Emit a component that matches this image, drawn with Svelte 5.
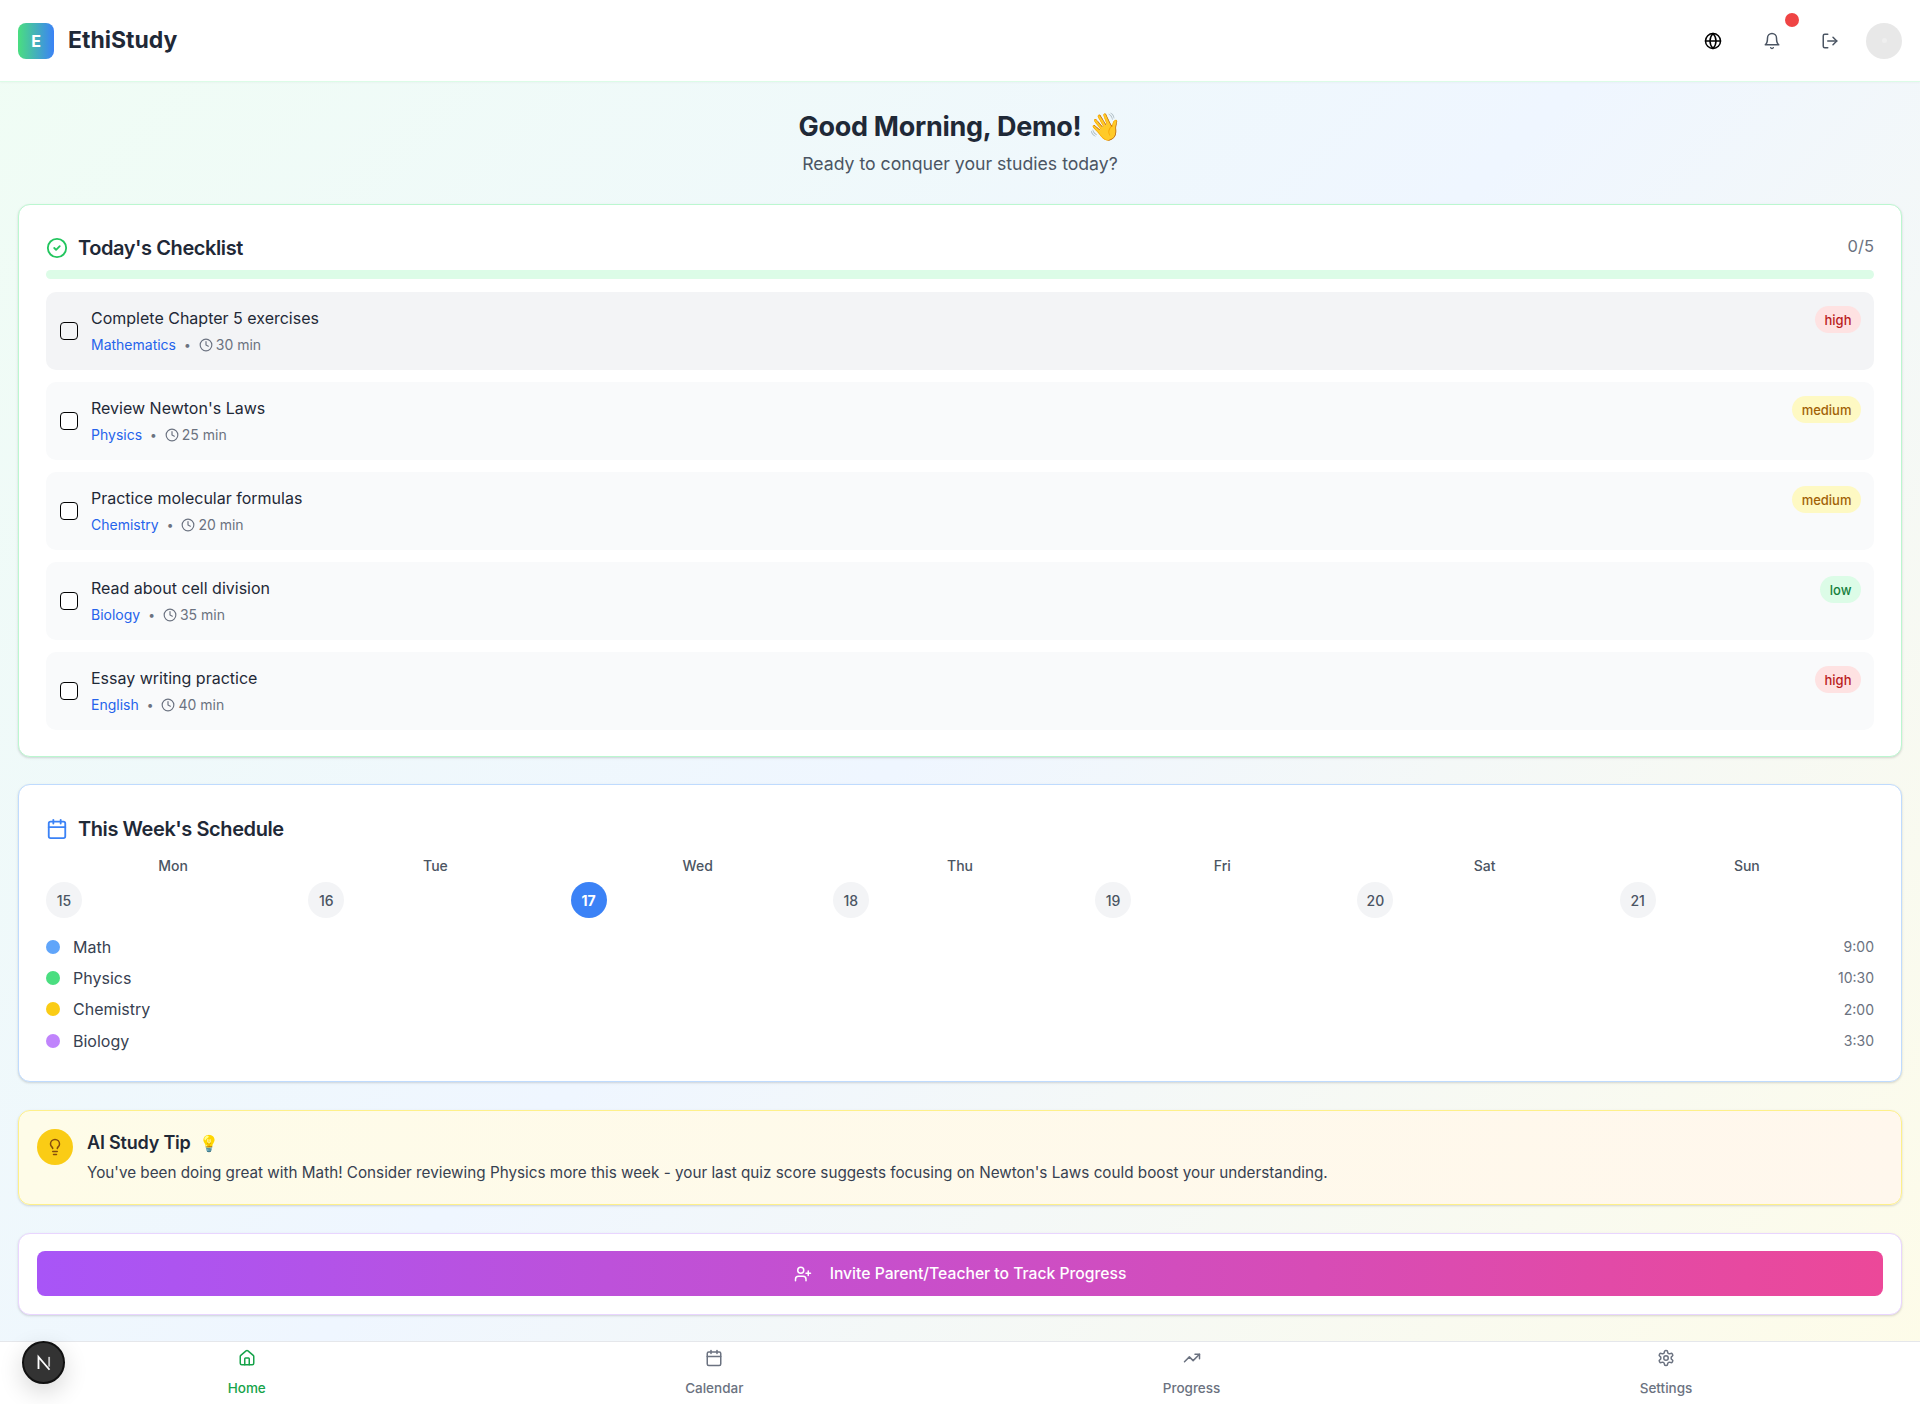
<script>
  const tasks = [
    { t: 'Complete Chapter 5 exercises', s: 'Mathematics', m: '30 min', p: 'high', hover: true },
    { t: "Review Newton's Laws", s: 'Physics', m: '25 min', p: 'medium' },
    { t: 'Practice molecular formulas', s: 'Chemistry', m: '20 min', p: 'medium' },
    { t: 'Read about cell division', s: 'Biology', m: '35 min', p: 'low' },
    { t: 'Essay writing practice', s: 'English', m: '40 min', p: 'high' }
  ];
  const days = [['Mon', 15], ['Tue', 16], ['Wed', 17], ['Thu', 18], ['Fri', 19], ['Sat', 20], ['Sun', 21]];
  const sched = [
    ['Math', '9:00', 'blue'], ['Physics', '10:30', 'green'], ['Chemistry', '2:00', 'yellow'], ['Biology', '3:30', 'purple']
  ];
</script>

<div class="page">
  <header class="top">
    <div class="brand">
      <div class="logo">E</div>
      <span class="name">EthiStudy</span>
    </div>
    <div class="actions">
      <button class="ib black" aria-label="Language">
        <svg viewBox="0 0 24 24"><circle cx="12" cy="12" r="10"/><path d="M12 2a14.5 14.5 0 0 0 0 20 14.5 14.5 0 0 0 0-20"/><path d="M2 12h20"/></svg>
      </button>
      <button class="ib bell" aria-label="Notifications">
        <svg viewBox="0 0 24 24"><path d="M6 8a6 6 0 0 1 12 0c0 7 3 9 3 9H3s3-2 3-9"/><path d="M10.3 21a1.94 1.94 0 0 0 3.4 0"/></svg>
        <span class="dot"></span>
      </button>
      <button class="ib" aria-label="Log out">
        <svg viewBox="0 0 24 24"><path d="M9 21H5a2 2 0 0 1-2-2V5a2 2 0 0 1 2-2h4"/><polyline points="16 17 21 12 16 7"/><line x1="21" y1="12" x2="9" y2="12"/></svg>
      </button>
      <div class="avatar"><i></i></div>
    </div>
  </header>

  <main>
    <section class="hello">
      <h1>Good Morning, Demo! <span class="emoji">👋</span></h1>
      <p>Ready to conquer your studies today?</p>
    </section>

    <section class="card check">
      <div class="head between">
        <div class="head">
          <svg class="hi green" viewBox="0 0 24 24"><circle cx="12" cy="12" r="10"/><path d="m9 12 2 2 4-4"/></svg>
          <h2>Today's Checklist</h2>
        </div>
        <span class="count">0/5</span>
      </div>
      <div class="bar"></div>
      <div class="list">
        {#each tasks as x}
          <div class="item" class:hover={x.hover}>
            <span class="box"></span>
            <div class="body">
              <div class="tt">{x.t}</div>
              <div class="meta">
                <span class="subj">{x.s}</span>
                <span class="sep">•</span>
                <svg viewBox="0 0 24 24"><circle cx="12" cy="12" r="10"/><polyline points="12 6 12 12 16 14"/></svg>
                <span>{x.m}</span>
              </div>
            </div>
            <span class="pill {x.p}">{x.p}</span>
          </div>
        {/each}
      </div>
    </section>

    <section class="card sched">
      <div class="head">
        <svg class="hi blue" viewBox="0 0 24 24"><path d="M8 2v4"/><path d="M16 2v4"/><rect x="3" y="4" width="18" height="18" rx="2"/><path d="M3 10h18"/></svg>
        <h2>This Week's Schedule</h2>
      </div>
      <div class="week">
        {#each days as d}
          <div class="day">
            <div class="dn">{d[0]}</div>
            <div class="num" class:today={d[1] === 17}>{d[1]}</div>
          </div>
        {/each}
      </div>
      <div class="rows">
        {#each sched as r}
          <div class="row">
            <span class="sd {r[2]}"></span>
            <span class="rn">{r[0]}</span>
            <span class="rt">{r[1]}</span>
          </div>
        {/each}
      </div>
    </section>

    <section class="card tip">
      <div class="bulb">
        <svg viewBox="0 0 24 24"><path d="M15 14c.2-1 .7-1.7 1.5-2.5 1-.9 1.5-2.2 1.5-3.5A6 6 0 0 0 6 8c0 1 .2 2.2 1.5 3.5.7.7 1.3 1.5 1.5 2.5"/><path d="M9 18h6"/><path d="M10 22h4"/></svg>
      </div>
      <div>
        <h3>AI Study Tip <span class="e2">💡</span></h3>
        <p>You've been doing great with Math! Consider reviewing Physics more this week - your last quiz score suggests focusing on Newton's Laws could boost your understanding.</p>
      </div>
    </section>

    <section class="card invite">
      <button class="cta">
        <svg viewBox="0 0 24 24"><path d="M16 21v-2a4 4 0 0 0-4-4H6a4 4 0 0 0-4 4v2"/><circle cx="9" cy="7" r="4"/><line x1="19" y1="8" x2="19" y2="14"/><line x1="22" y1="11" x2="16" y2="11"/></svg>
        <span>Invite Parent/Teacher to Track Progress</span>
      </button>
    </section>
  </main>

  <nav>
    <div class="nv on">
      <svg viewBox="0 0 24 24"><path d="M15 21v-8a1 1 0 0 0-1-1h-4a1 1 0 0 0-1 1v8"/><path d="M3 10a2 2 0 0 1 .709-1.528l7-5.999a2 2 0 0 1 2.582 0l7 5.999A2 2 0 0 1 21 10v9a2 2 0 0 1-2 2H5a2 2 0 0 1-2-2z"/></svg>
      <span>Home</span>
    </div>
    <div class="nv">
      <svg viewBox="0 0 24 24"><path d="M8 2v4"/><path d="M16 2v4"/><rect x="3" y="4" width="18" height="18" rx="2"/><path d="M3 10h18"/></svg>
      <span>Calendar</span>
    </div>
    <div class="nv">
      <svg viewBox="0 0 24 24"><polyline points="22 7 13.5 15.5 8.5 10.5 2 17"/><polyline points="16 7 22 7 22 13"/></svg>
      <span>Progress</span>
    </div>
    <div class="nv">
      <svg viewBox="0 0 24 24"><path d="M12.22 2h-.44a2 2 0 0 0-2 2v.18a2 2 0 0 1-1 1.73l-.43.25a2 2 0 0 1-2 0l-.15-.08a2 2 0 0 0-2.73.73l-.22.38a2 2 0 0 0 .73 2.73l.15.1a2 2 0 0 1 1 1.72v.51a2 2 0 0 1-1 1.74l-.15.09a2 2 0 0 0-.73 2.73l.22.38a2 2 0 0 0 2.73.73l.15-.08a2 2 0 0 1 2 0l.43.25a2 2 0 0 1 1 1.73V20a2 2 0 0 0 2 2h.44a2 2 0 0 0 2-2v-.18a2 2 0 0 1 1-1.73l.43-.25a2 2 0 0 1 2 0l.15.08a2 2 0 0 0 2.73-.73l.22-.39a2 2 0 0 0-.73-2.73l-.15-.08a2 2 0 0 1-1-1.74v-.5a2 2 0 0 1 1-1.74l.15-.09a2 2 0 0 0 .73-2.73l-.22-.38a2 2 0 0 0-2.73-.73l-.15.08a2 2 0 0 1-2 0l-.43-.25a2 2 0 0 1-1-1.73V4a2 2 0 0 0-2-2z"/><circle cx="12" cy="12" r="3"/></svg>
      <span>Settings</span>
    </div>
    <div class="devn" aria-label="Next.js">
      <svg viewBox="0 0 18 18"><path class="nl" d="M4.5 14V4l9 10.5"/><path class="nr" d="M13.2 4v8"/></svg>
    </div>
  </nav>
</div>

<style>
  :global(body) { margin: 0; }
  * { box-sizing: border-box; }
  svg { fill: none; stroke: currentColor; stroke-width: 2; stroke-linecap: round; stroke-linejoin: round; display: block; flex: none; }
  .page {
    height: 1404px; display: flex; flex-direction: column; overflow: hidden;
    font-family: Inter, "Noto Sans", sans-serif; color: #1f2937;
    background: linear-gradient(135deg, #f0fdf4 0%, #eff6ff 50%, #fefce8 100%);
  }
  h1, h2, h3, p { margin: 0; }
  button { border: 0; background: none; font: inherit; padding: 0; }

  .top {
    height: 82px; flex: none; background: #fff; border-bottom: 1px solid #dcfce7;
    display: flex; align-items: center; justify-content: space-between; padding: 0 18px;
    box-shadow: 0 1px 2px rgba(0,0,0,.03);
  }
  .brand { display: flex; align-items: center; gap: 14px; }
  .logo {
    width: 36px; height: 36px; border-radius: 8px; color: #fff; font-weight: 700; font-size: 16px;
    display: flex; align-items: center; justify-content: center;
    background: linear-gradient(90deg, #4ade80, #3b82f6);
  }
  .name { font-size: 23px; font-weight: 700; color: #1f2937; margin-top: -1px; }
  .actions { display: flex; align-items: center; gap: 16px; }
  .ib { width: 42px; height: 42px; display: flex; align-items: center; justify-content: center; position: relative; color: #4b5563; }
  .ib svg { width: 18px; height: 18px; }
  .ib.black { color: #000; }
  .ib.bell { margin-left: 1px; }
  .dot { position: absolute; top: -7px; right: -6px; width: 14px; height: 14px; border-radius: 50%; background: #ef4444; }
  .avatar { width: 36px; height: 36px; border-radius: 50%; background: #e8e8e8; display: flex; align-items: center; justify-content: center; margin-left: -1px; }
  .avatar i { width: 5px; height: 5px; border-radius: 50%; background: #efefef; }

  main { flex: 1; padding: 28px 18px 0; display: flex; flex-direction: column; }
  .hello { text-align: center; height: 94px; }
  .hello h1 { font-size: 27px; line-height: 34px; font-weight: 700; color: #1f2937; letter-spacing: -.27px; }
  .emoji { font-size: 27px; letter-spacing: 0; }
  .hello p { font-size: 17.65px; line-height: 28px; margin-top: 6px; color: #4b5563; }

  .card { background: #fff; border: 1px solid; border-radius: 12px; box-shadow: 0 1px 3px rgba(0,0,0,.1), 0 1px 2px rgba(0,0,0,.06); }
  .check { border-color: #bbf7d0; padding: 29px 27px 27px; height: 553px; margin-bottom: 27px; }
  .sched { border-color: #bfdbfe; padding: 30px 27px 27px; height: 298px; margin-bottom: 28px; }
  .head { display: flex; align-items: center; gap: 10px; }
  .between { justify-content: space-between; }
  .head h2 { font-size: 20px; line-height: 28px; font-weight: 600; color: #1f2937; letter-spacing: -.42px; }
  .hi { width: 22px; height: 22px; }
  .hi.green { color: #22c55e; }
  .hi.blue { color: #3b82f6; }
  .count { font-size: 16.5px; color: #6b7280; margin-bottom: 4px; }
  .bar { height: 9px; background: #dcfce7; border-radius: 99px; margin-top: 8px; }
  .list { display: flex; flex-direction: column; gap: 12px; margin-top: 13px; }
  .item { height: 78px; background: #f9fafb; border-radius: 10px; padding: 14px 13px 14px 14px; display: flex; align-items: flex-start; gap: 13px; }
  .item.hover { background: #f3f4f6; }
  .box { width: 18px; height: 18px; border: 1px solid #000; border-radius: 4px; background: #fff; margin-top: 16px; flex: none; }
  .item.hover .box { background: transparent; }
  .body { flex: 1; }
  .tt { font-size: 16px; line-height: 24px; font-weight: 400; color: #1f2937; }
  .meta { display: flex; align-items: center; font-size: 14px; line-height: 20px; color: #6b7280; margin-top: 5px; }
  .meta svg { width: 14px; height: 14px; margin-right: 3px; }
  .subj { color: #2563eb; font-weight: 400; }
  .sep { margin: 0 8px; font-size: 12px; }
  .pill { font-size: 13px; line-height: 20px; padding: 3.5px 9.5px; border-radius: 99px; font-weight: 500; }
  .pill.high { background: #fee2e2; color: #b91c1c; }
  .pill.medium { background: #fef9c3; color: #a16207; }
  .pill.low { background: #dcfce7; color: #15803d; }

  .week { display: grid; grid-template-columns: repeat(7, 1fr); gap: 8px; margin-top: 13px; }
  .dn { font-size: 14px; line-height: 20px; font-weight: 500; color: #4b5563; text-align: center; }
  .num { width: 36px; height: 36px; border-radius: 50%; background: #f3f4f6; color: #4b5563; font-size: 14px; font-weight: 500; display: flex; align-items: center; justify-content: center; margin-top: 6px; }
  .num.today { background: #3b82f6; color: #fff; font-weight: 700; }
  .rows { margin-top: 18px; display: flex; flex-direction: column; gap: 10.4px; }
  .row { display: flex; align-items: center; height: 21px; }
  .sd { width: 14px; height: 14px; border-radius: 50%; margin-right: 13px; }
  .sd.blue { background: #60a5fa; }
  .sd.green { background: #4ade80; }
  .sd.yellow { background: #facc15; }
  .sd.purple { background: #c084fc; }
  .rn { flex: 1; font-size: 16px; font-weight: 400; color: #374151; }
  .rt { font-size: 14px; color: #6b7280; }

  .tip { border-color: #fef08a; background: linear-gradient(90deg, #fefce8, #fff7ed); padding: 18px; height: 95px; margin-bottom: 28px; display: flex; gap: 14px; }
  .bulb { width: 36px; height: 36px; border-radius: 50%; background: #facc15; color: #854d0e; display: flex; align-items: center; justify-content: center; flex: none; }
  .bulb svg { width: 18px; height: 18px; }
  .tip h3 { font-size: 18px; line-height: 28px; font-weight: 600; color: #1f2937; letter-spacing: -.2px; }
  .e2 { font-size: 16px; margin-left: 4px; letter-spacing: 0; }
  .tip p { font-size: 15.25px; line-height: 24px; color: #374151; margin-top: 4px; }

  .invite { border-color: #e9d5ff; padding: 17px 18px; height: 82px; }
  .cta { width: 100%; height: 45px; border-radius: 8px; background: linear-gradient(90deg, #a855f7, #ec4899); color: #fff; font-size: 15.7px; font-weight: 500; display: flex; align-items: center; justify-content: center; gap: 18px; }
  .cta svg { width: 18px; height: 18px; }

  nav { height: 63px; flex: none; background: #fff; border-top: 1px solid #e5e7eb; display: flex; justify-content: space-around; padding: 0 18px; position: relative; }
  .nv { display: flex; flex-direction: column; align-items: center; color: #6b7280; font-size: 13.5px; font-weight: 500; padding-top: 7px; }
  .nv svg { width: 18px; height: 18px; margin-bottom: 13px; }
  .nv.on { color: #16a34a; }
  .devn { position: absolute; left: 22px; top: -1px; width: 43px; height: 43px; border-radius: 50%; background: #333; border: 2px solid #111; color: #fff; display: flex; align-items: center; justify-content: center; box-shadow: 0 8px 24px rgba(0,0,0,.16); }
  .devn svg { width: 22px; height: 22px; stroke-width: 1.5; stroke-linecap: butt; stroke-linejoin: miter; }
  .devn .nr { opacity: .7; }
</style>
